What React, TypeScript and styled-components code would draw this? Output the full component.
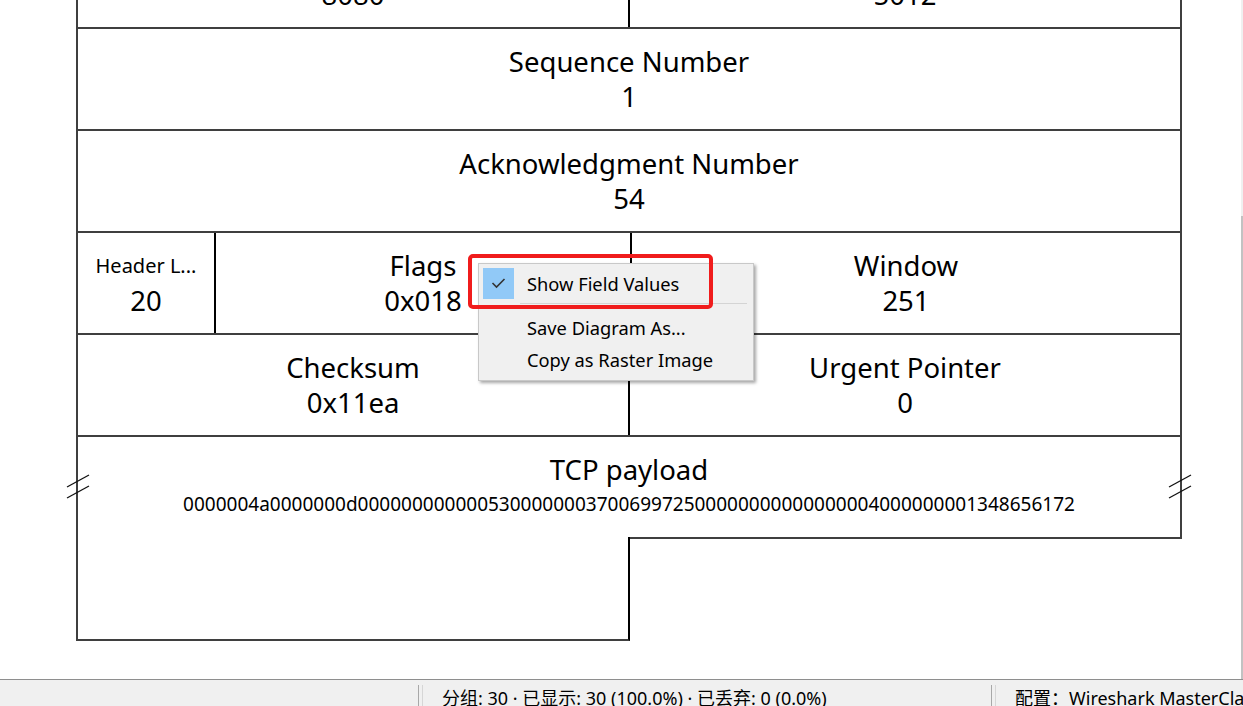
import React from 'react';
import styled, { createGlobalStyle } from 'styled-components';

const GlobalStyle = createGlobalStyle`
  html, body {
    margin: 0;
    padding: 0;
    background: #ffffff;
    overflow: hidden;
  }
  body {
    font-family: "Noto Sans", "Noto Sans CJK SC", sans-serif;
  }
`;

const LINE = '#3f3f3f';

const Window = styled.div`
  width: 1243px;
  height: 706px;
  display: flex;
  flex-direction: column;
  overflow: hidden;
`;

const Main = styled.div`
  flex: 1;
  display: flex;
  min-height: 0;
`;

const Canvas = styled.div`
  position: relative;
  flex: 1;
  overflow: hidden;
  background: #ffffff;
  padding-left: 76px;
`;

const ScrollTrack = styled.div`
  width: 2px;
  background: #f0f0f0;
  display: flex;
  flex-direction: column;
  padding-top: 216px;
`;

const ScrollThumb = styled.div`
  flex: 1;
  background: #c2c2c2;
`;

const Diagram = styled.div`
  width: 1106px;
  margin-top: -73px;
  display: flex;
  flex-direction: column;
  color: #000;
`;

const Row = styled.div`
  display: flex;
  box-sizing: border-box;
  height: 102px;
  border-left: 2px solid ${LINE};
  border-right: 2px solid ${LINE};
  border-bottom: 2px solid ${LINE};
`;

const PayloadRow = styled.div`
  position: relative;
  display: flex;
  box-sizing: border-box;
  height: 100px;
  border-left: 2px solid ${LINE};
  border-right: 2px solid ${LINE};
`;

const TailRow = styled.div`
  display: flex;
`;

const TailLeft = styled.div`
  box-sizing: border-box;
  width: 554px;
  height: 104px;
  border-left: 2px solid ${LINE};
  border-right: 2px solid #000;
  border-bottom: 2px solid ${LINE};
`;

const TailRight = styled.div`
  flex: 1;
  border-top: 2px solid ${LINE};
`;

const Cell = styled.div<{ $w?: number; $divider?: boolean }>`
  ${(p) => (p.$w ? `width: ${p.$w}px;` : 'flex: 1;')}
  flex-shrink: 0;
  display: flex;
  flex-direction: column;
  align-items: center;
  justify-content: center;
  border-left: ${(p) => (p.$divider ? '2px solid #000' : 'none')};
  min-width: 0;
`;

const Name = styled.div<{ $small?: boolean }>`
  font-size: ${(p) => (p.$small ? '20px' : '27.5px')};
  line-height: 35px;
  white-space: nowrap;
`;

const Value = styled.div<{ $small?: boolean }>`
  font-size: ${(p) => (p.$small ? '19px' : '27.5px')};
  line-height: 35px;
  white-space: nowrap;
`;

const BreakMark = styled.svg<{ $side: 'left' | 'right' }>`
  position: absolute;
  top: 37px;
  ${(p) => (p.$side === 'left' ? 'left: -12px;' : 'right: -12px;')}
  width: 24px;
  height: 26px;
  overflow: visible;
`;

const Menu = styled.div`
  position: absolute;
  left: 478px;
  top: 263px;
  width: 276px;
  box-sizing: border-box;
  padding: 3px 4px 5px 4px;
  background: #f0f0f0;
  border: 1px solid #c8c8c8;
  box-shadow: 2px 2px 3px rgba(0, 0, 0, 0.35);
  font-family: "Noto Sans", sans-serif;
  font-size: 18.3px;
  color: #000;
`;

const MenuItem = styled.div`
  display: flex;
  align-items: center;
  height: 32px;
  white-space: nowrap;
`;

const CheckBox = styled.div<{ $on?: boolean }>`
  width: 31px;
  height: 31px;
  margin-right: 13px;
  flex-shrink: 0;
  display: flex;
  align-items: center;
  justify-content: center;
  background: ${(p) => (p.$on ? '#91c9f7' : 'transparent')};
`;

const MenuSeparator = styled.div`
  height: 1px;
  background: #d4d4d4;
  margin: 4px 2px 7px 37px;
`;

const Annotation = styled.div`
  position: absolute;
  left: 468px;
  top: 254px;
  width: 245px;
  height: 55px;
  box-sizing: border-box;
  border: 4px solid #f01c1c;
  border-radius: 5px;
  pointer-events: none;
`;

const StatusBar = styled.div`
  height: 27px;
  box-sizing: border-box;
  border-top: 1px solid #8e8e8e;
  background: #f0f0f0;
  display: flex;
  align-items: flex-start;
  font-family: "Noto Sans", "Noto Sans CJK SC", sans-serif;
  font-size: 18px;
  color: #000;
  white-space: nowrap;
  overflow: hidden;
`;

const StatusSpacer = styled.div<{ $w: number }>`
  width: ${(p) => p.$w}px;
  flex-shrink: 0;
`;

const StatusSep = styled.div`
  flex-shrink: 0;
  align-self: stretch;
  margin-top: 5px;
  width: 3px;
  border-left: 1px solid #a8a8a8;
  border-right: 1px solid #d6d6d6;
  margin-right: 19px;
`;

const StatusText = styled.div<{ $w?: number }>`
  ${(p) => (p.$w ? `width: ${p.$w}px;` : 'flex: 1;')}
  flex-shrink: 0;
  overflow: hidden;
  line-height: 24px;
  padding-top: 6px;
`;

const Break = ({ side }: { side: 'left' | 'right' }) => (
  <BreakMark $side={side} viewBox="0 0 24 26">
    <line x1="1" y1="13" x2="23" y2="1" stroke="#111" strokeWidth="1.3" />
    <line x1="1" y1="24" x2="23" y2="12" stroke="#111" strokeWidth="1.3" />
  </BreakMark>
);

const Check = () => (
  <svg width="15" height="12" viewBox="0 0 15 12">
    <path d="M1.5 6 L5.5 10 L13.5 2" fill="none" stroke="#333" strokeWidth="1.6" />
  </svg>
);

const payload =
  '0000004a0000000d000000000000530000000370069972500000000000000004000000001348656172';

export default function App() {
  return (
    <Window>
      <GlobalStyle />
      <Main>
        <Canvas>
          <Diagram>
            <Row>
              <Cell>
                <Name>Source Port</Name>
                <Value>8080</Value>
              </Cell>
              <Cell $divider>
                <Name>Destination Port</Name>
                <Value>5012</Value>
              </Cell>
            </Row>
            <Row>
              <Cell>
                <Name>Sequence Number</Name>
                <Value>1</Value>
              </Cell>
            </Row>
            <Row>
              <Cell>
                <Name>Acknowledgment Number</Name>
                <Value>54</Value>
              </Cell>
            </Row>
            <Row>
              <Cell $w={136}>
                <Name $small>Header L...</Name>
                <Value>20</Value>
              </Cell>
              <Cell $w={414} $divider>
                <Name>Flags</Name>
                <Value>0x018</Value>
              </Cell>
              <Cell $divider>
                <Name>Window</Name>
                <Value>251</Value>
              </Cell>
            </Row>
            <Row>
              <Cell>
                <Name>Checksum</Name>
                <Value>0x11ea</Value>
              </Cell>
              <Cell $divider>
                <Name>Urgent Pointer</Name>
                <Value>0</Value>
              </Cell>
            </Row>
            <PayloadRow>
              <Cell>
                <Name>TCP payload</Name>
                <Value $small>{payload}</Value>
              </Cell>
              <Break side="left" />
              <Break side="right" />
            </PayloadRow>
            <TailRow>
              <TailLeft />
              <TailRight />
            </TailRow>
          </Diagram>

          <Menu>
            <MenuItem>
              <CheckBox $on>
                <Check />
              </CheckBox>
              Show Field Values
            </MenuItem>
            <MenuSeparator />
            <MenuItem>
              <CheckBox />
              Save Diagram As...
            </MenuItem>
            <MenuItem>
              <CheckBox />
              Copy as Raster Image
            </MenuItem>
          </Menu>
          <Annotation />
        </Canvas>
        <ScrollTrack>
          <ScrollThumb />
        </ScrollTrack>
      </Main>
      <StatusBar>
        <StatusSpacer $w={418} />
        <StatusSep />
        <StatusText $w={549}>分组: 30 · 已显示: 30 (100.0%) · 已丢弃: 0 (0.0%)</StatusText>
        <StatusSep />
        <StatusText>配置：Wireshark MasterClass</StatusText>
      </StatusBar>
    </Window>
  );
}
